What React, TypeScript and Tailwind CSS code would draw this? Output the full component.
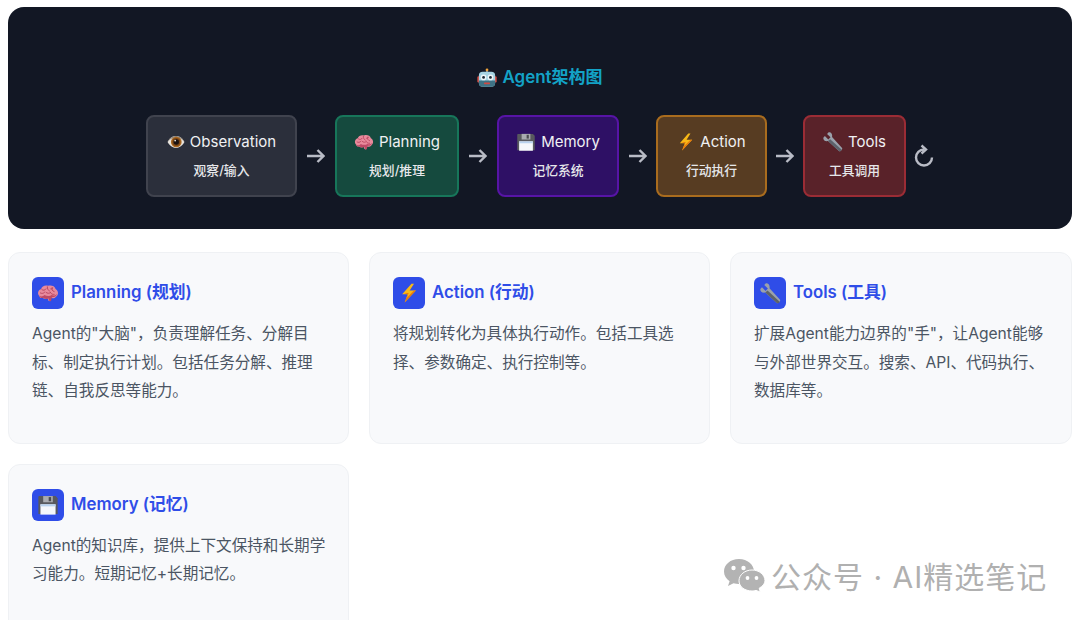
import type { ReactNode } from "react";

function EyeIcon({ className }: { className?: string }) {
  return (
    <svg viewBox="0 0 32 32" className={className} aria-hidden="true">
      <path d="M1 16C6 7 12 5.500 16 5.500S26 7 31 16c-5 9-11 10.500-15 10.500S6 25 1 16z" fill="#e8e4de" />
      <path d="M1 16C6 7 12 5.500 16 5.500S26 7 31 16c-5-6-10-8-15-8S6 10 1 16z" fill="#8d857c" />
      <circle cx="16.500" cy="16" r="9.500" fill="#a9671f" />
      <circle cx="16.500" cy="16" r="7" fill="#7a4516" />
      <circle cx="16.500" cy="16" r="4.800" fill="#1a1110" />
      <circle cx="14.500" cy="13.500" r="1.500" fill="#f3ede5" />
    </svg>
  );
}

function BrainIcon({ className }: { className?: string }) {
  return (
    <svg viewBox="0 0 32 32" className={className} aria-hidden="true">
      <path d="M3 20c-3-4-1-9 3-10 1-4 6-6 10-4.500 4-1.500 10 0 11 4.500 4 2 5 8 1 11-2 3-6 3-8 2 0 2 0 4-1 5-2 0-3-1-3-4-3 1-6 1-8-1-2 1-4 0-5-3.500z" fill="#e88a9c" />
      <path d="M3 20c3 2 6 1 8-1 3 2 8 2 10 0 3 1 6 1 8-2-1 4-3 5-7 5-1 1-1 5-2 6-2 0-3-1-3-4-3 1-6 1-8-1-2 1-4 0-6-3z" fill="#bd4a66" />
      <path d="M7 11c2 2 5 1 6-1M5 16c2 1 4 1 6-1M15 7c0 3 1 5 3 6M13 15c2 2 5 2 7 0M22 8c-1 3 0 5 3 6M20 10c1 0 2 0 3-1M25 18c-2 0-4 0-5-2" fill="none" stroke="#b8465f" strokeWidth="1.400" strokeLinecap="round" />
    </svg>
  );
}

function FloppyIcon({ className }: { className?: string }) {
  return (
    <svg viewBox="0 0 32 32" className={className} aria-hidden="true">
      <path d="M3 3h24l3 3v23H2V4z" fill="#58595e" />
      <rect x="9" y="3" width="14" height="9" fill="#a9abb0" />
      <rect x="17" y="4.500" width="3.500" height="6" fill="#4a4b50" />
      <rect x="5" y="15" width="22" height="15" fill="#f5f7fb" />
      <rect x="5" y="15" width="22" height="3" fill="#b9d2ef" />
    </svg>
  );
}

function BoltIcon({ className }: { className?: string }) {
  return (
    <svg viewBox="0 0 32 32" className={className} aria-hidden="true">
      <path d="M20 1 5 18h9L9 31l18-19h-10L24 1z" fill="#f9b916" />
      <path d="M14 18 9 31l18-19h-3L12.500 23.500 15.500 16H8z" fill="#e8780e" />
    </svg>
  );
}

function WrenchIcon({ className }: { className?: string }) {
  return (
    <svg viewBox="0 0 32 32" className={className} aria-hidden="true">
      <path d="M9 0.500 6.500 3 12 8.500 8.500 12 3 6.500 0.500 9C0 12.500 3 15.500 8 14.500L25.500 30.500C27.500 32 32 27.500 30.500 25.500L14.500 8C15.500 3 12.500 0 9 0.500z" fill="#9aa1ab" />
      <path d="M8 14.500 25.500 30.500C27 31.500 29 30.500 30 28.500L11.500 11.500z" fill="#5c626b" />
    </svg>
  );
}

function RobotIcon({ className }: { className?: string }) {
  return (
    <svg viewBox="0 0 32 32" className={className} aria-hidden="true">
      <rect x="14.500" y="2.500" width="3" height="5" fill="#8b8f96" />
      <circle cx="16" cy="3" r="2.200" fill="#f1a33a" />
      <rect x="0.500" y="13" width="5" height="10" rx="2" fill="#d2493f" />
      <rect x="26.500" y="13" width="5" height="10" rx="2" fill="#d2493f" />
      <rect x="3" y="6" width="26" height="24" rx="6" fill="#a5d3e2" />
      <path d="M3 20h26v4a6 6 0 0 1-6 6H9a6 6 0 0 1-6-6z" fill="#3f7386" />
      <circle cx="10.500" cy="15" r="4.500" fill="#eef6f8" />
      <circle cx="21.500" cy="15" r="4.500" fill="#eef6f8" />
      <circle cx="10.500" cy="15" r="2.200" fill="#1d2a36" />
      <circle cx="21.500" cy="15" r="2.200" fill="#1d2a36" />
      <rect x="11" y="23" width="10" height="3" rx="1.500" fill="#cf4a43" />
    </svg>
  );
}

function WechatIcon() {
  return (
    <svg viewBox="0 0 42 34" className="h-[34px] w-[42px]" aria-hidden="true">
      <path d="M16 1C7.500 1 1 6.500 1 13.500c0 4 2.200 7.500 5.600 9.800L5 28l5.500-2.800c1.800.5 3.600.8 5.500.8 8.500 0 15-5.600 15-12.500S24.500 1 16 1z" fill="#b3b3b3" />
      <circle cx="10.500" cy="10" r="2.200" fill="#fff" />
      <circle cx="20.500" cy="10" r="2.200" fill="#fff" />
      <path d="M29 12c-7 0-13 4.700-13 10.800S22 33 29 33c1.400 0 2.700-.2 4-.6l4.300 1.600-1.100-3.800c3.400-2 5.800-4.600 5.800-7.400C42 16.700 36 12 29 12z" fill="#b3b3b3" stroke="#fff" strokeWidth="1" />
      <circle cx="24.500" cy="20" r="1.900" fill="#fff" />
      <circle cx="33.500" cy="20" r="1.900" fill="#fff" />
    </svg>
  );
}

type Step = {
  icon: ReactNode;
  name: string;
  sub: string;
  box: string;
  gap?: string;
};

const steps: Step[] = [
  {
    icon: <EyeIcon className="h-[18px] w-[18px]" />,
    name: "Observation",
    sub: "观察/输入",
    box: "w-[151px] bg-[#2b2f3b] border-[#40434e]",
  },
  {
    icon: <BrainIcon className="h-[20px] w-[20px]" />,
    name: "Planning",
    sub: "规划/推理",
    box: "w-[124px] bg-[#154a3e] border-[#17765a]",
    gap: "w-[38px]",
  },
  {
    icon: <FloppyIcon className="h-[20px] w-[20px]" />,
    name: "Memory",
    sub: "记忆系统",
    box: "w-[122px] bg-[#2e1065] border-[#5714a6]",
    gap: "w-[38px]",
  },
  {
    icon: <BoltIcon className="h-[18px] w-[18px]" />,
    name: "Action",
    sub: "行动执行",
    box: "w-[111px] bg-[#573c22] border-[#a96c1e]",
    gap: "w-[37px]",
  },
  {
    icon: <WrenchIcon className="h-[20px] w-[20px]" />,
    name: "Tools",
    sub: "工具调用",
    box: "w-[103px] bg-[#592229] border-[#9b2c35]",
    gap: "w-[36px]",
  },
];

const cards = [
  {
    icon: <BrainIcon className="h-[22px] w-[22px]" />,
    title: "Planning (规划)",
    text: 'Agent的"大脑"，负责理解任务、分解目标、制定执行计划。包括任务分解、推理链、自我反思等能力。',
  },
  {
    icon: <BoltIcon className="h-[20px] w-[20px]" />,
    title: "Action (行动)",
    text: "将规划转化为具体执行动作。包括工具选择、参数确定、执行控制等。",
  },
  {
    icon: <WrenchIcon className="h-[21px] w-[21px]" />,
    title: "Tools (工具)",
    text: '扩展Agent能力边界的"手"，让Agent能够与外部世界交互。搜索、API、代码执行、数据库等。',
  },
  {
    icon: <FloppyIcon className="h-[22px] w-[22px]" />,
    title: "Memory (记忆)",
    text: "Agent的知识库，提供上下文保持和长期学习能力。短期记忆+长期记忆。",
  },
];

export default function App() {
  return (
    <div lang="zh-CN" className="relative h-[620px] w-[1080px] overflow-hidden bg-white px-2 pt-[7px] font-['Inter','Noto_Sans_CJK_SC',sans-serif]">
      <section className="flex h-[222px] flex-col items-center rounded-2xl bg-[#121724] pt-[59px]">
        <h2 className="flex h-6 items-center gap-[5px] text-[17px] font-semibold text-[#13a3c7]">
          <RobotIcon className="h-[20px] w-[20px]" />
          Agent架构图
        </h2>
        <div className="mt-[25px] flex items-center">
          {steps.map((step) => (
            <div key={step.name} className="flex items-center">
              {step.gap && (
                <div className={`flex justify-center ${step.gap}`}>
                  <svg viewBox="0 0 18 14" className="h-[14px] w-[18px] text-[#b9bcc6]" fill="none" stroke="currentColor" strokeWidth="2.400" aria-hidden="true">
                    <path d="M0 7h16.500M10.500 1l6 6-6 6" />
                  </svg>
                </div>
              )}
              <div className={`flex h-[82px] flex-col items-center justify-center rounded-lg border-2 ${step.box}`}>
                <div className="-mt-[2px] flex items-center gap-[5px] text-[15px] leading-6 font-normal text-[#f0f1f3]">
                  {step.icon}
                  {step.name}
                </div>
                <div className="mt-[7px] text-[12.8px] leading-5 font-medium text-[#e6e7ea]">{step.sub}</div>
              </div>
            </div>
          ))}
          <svg viewBox="0 0 20 24" className="ml-2 h-6 w-5 text-[#b9bcc6]" fill="none" stroke="currentColor" strokeWidth="2.400" aria-hidden="true">
            <path d="M10 5.500A8 8 0 1 0 18 13.500" />
            <path d="M7.500 1.500 12 5.500 7.500 9.500" />
          </svg>
        </div>
      </section>

      <div className="mt-[23px] grid grid-cols-[341px_341px_342px] gap-x-5 gap-y-[19.5px]">
        {cards.map((card) => (
          <div key={card.title} className="h-[192px] rounded-xl border border-[#eff1f4] bg-[#f8f9fb] pt-6 pr-[22px] pl-[23px]">
            <div className="flex items-center gap-[7px]">
              <div className="flex h-8 w-8 items-center justify-center rounded-md bg-[#2f4de8]">{card.icon}</div>
              <h3 className="text-[16.8px] font-semibold text-[#2f4de8]">{card.title}</h3>
            </div>
            <p className="mt-[11px] text-[15.6px] leading-[28.6px] text-[#4b5563]">{card.text}</p>
          </div>
        ))}
      </div>

      <div className="absolute top-[558px] left-[723px] flex items-start gap-[6px] text-[30px] leading-9 text-[#b0b0b0]">
        <WechatIcon />
        <span className="mt-px tracking-[1px]">公众号 · AI精选笔记</span>
      </div>
    </div>
  );
}
